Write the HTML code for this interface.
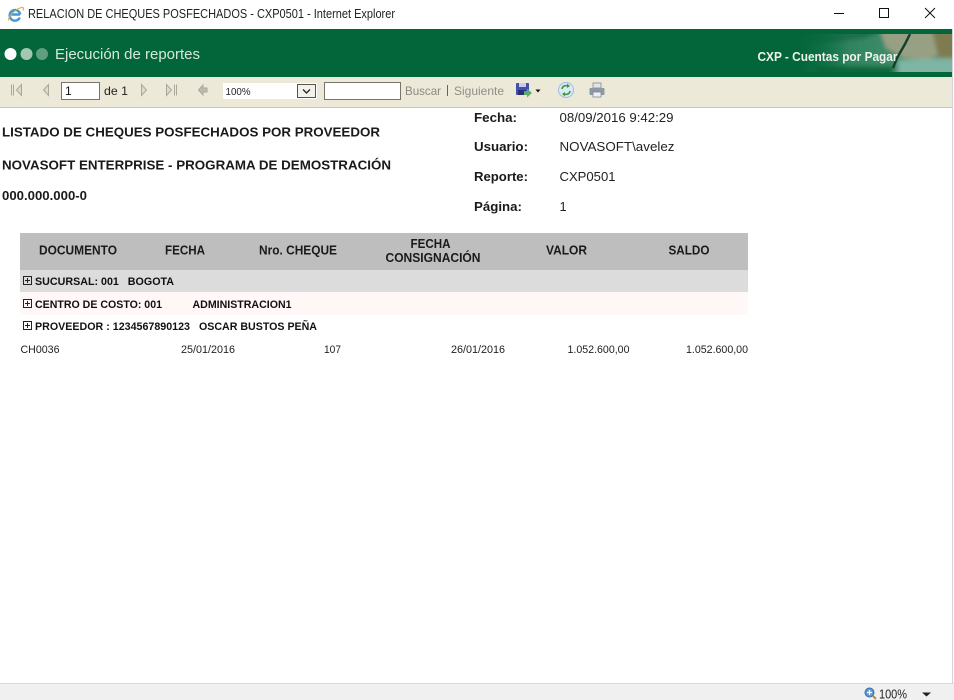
<!DOCTYPE html>
<html lang="es"><head><meta charset="utf-8"><title>RELACION DE CHEQUES POSFECHADOS - CXP0501 - Internet Explorer</title>
<style>
html,body{margin:0;padding:0;width:954px;height:700px;overflow:hidden;background:#fff}
svg{display:block;font-family:"Liberation Sans",Arial,sans-serif}
.h{font-size:12.8px;font-weight:bold;fill:#1a1a1a}
.g{font-size:11.2px;font-weight:bold;fill:#111}
.d{font-size:10.8px;fill:#222}
.m{font-size:12.8px;fill:#222}
</style></head><body>
<svg width="954" height="700" viewBox="0 0 954 700" xmlns="http://www.w3.org/2000/svg">
<defs>
<linearGradient id="fade" x1="0" x2="1" y1="0" y2="0"><stop offset="0" stop-color="#03663a"/><stop offset=".5" stop-color="#03663a" stop-opacity=".6"/><stop offset="1" stop-color="#03663a" stop-opacity="0"/></linearGradient>
<linearGradient id="ph" x1="0" x2="1" y1="0" y2="0"><stop offset="0" stop-color="#1f7a52"/><stop offset=".55" stop-color="#3c8a68"/><stop offset="1" stop-color="#6f9270"/></linearGradient>
<clipPath id="pc"><rect x="800" y="34" width="152" height="38"/></clipPath>
<filter id="bl" x="-10%" y="-10%" width="120%" height="120%"><feGaussianBlur stdDeviation="2.200"/></filter>
</defs>
<rect width="954" height="700" fill="#fff"/>

<!-- title bar -->
<path d="M10 14.500h10M19.800 17.500a5.300 5.300 0 1 1 .4-3" fill="none" stroke="#3f97dc" stroke-width="2.400"/>
<path d="M8.500 20.500c0-4 6-11 13-13 1.500-.5 2.500.5 1.500 3" fill="none" stroke="#e3ad36" stroke-width="1.100"/>
<text x="28" y="18" font-size="12.500" fill="#222" textLength="367" lengthAdjust="spacingAndGlyphs">RELACION DE CHEQUES POSFECHADOS - CXP0501 - Internet Explorer</text>
<path d="M834 13.500h10" stroke="#111" stroke-width="1"/>
<rect x="879.500" y="8.500" width="9" height="9" fill="none" stroke="#111"/>
<path d="M925 8l10 10M935 8l-10 10" stroke="#111" stroke-width="1" fill="none"/>

<!-- green banner -->
<rect x="0" y="29" width="952" height="48" fill="#03663a"/>
<circle cx="10.500" cy="54" r="6" fill="#fff"/>
<circle cx="26.500" cy="54" r="6" fill="#a3c7b3"/>
<circle cx="42" cy="54" r="6" fill="#5f9e80"/>
<text x="55" y="59" font-size="15" fill="#d6e8dd" textLength="145" lengthAdjust="spacingAndGlyphs">Ejecución de reportes</text>
<g clip-path="url(#pc)">
<g filter="url(#bl)">
<rect x="796" y="30" width="160" height="46" fill="url(#ph)"/>
<path d="M796 30h90l-20 8-30 4-40 2z" fill="#1a6f4b"/>
<path d="M815 66h80l-4 10h-76z" fill="#10693b"/>
<path d="M880 30h54l4 24-10 6-24-2-18-10z" fill="#98a084"/>
<path d="M932 30h24v30l-18-4z" fill="#7f7a50"/>
<path d="M898 60l58-2v18h-58z" fill="#7fb5a4"/>
</g>
<path d="M910 34l-5 10-8 14-4 10" fill="none" stroke="#14402a" stroke-width="2.400"/>
</g>
<rect x="800" y="34" width="50" height="38" fill="url(#fade)"/>
<text x="757.500" y="61" font-size="12.500" font-weight="bold" fill="#eef4ec" textLength="140" lengthAdjust="spacingAndGlyphs">CXP - Cuentas por Pagar</text>

<!-- toolbar -->
<rect x="0" y="77" width="952" height="30" fill="#ece9d8"/>
<rect x="0" y="107" width="952" height="1" fill="#c9c7ba"/>
<g fill="#dddbcc" stroke="#a9a79b" stroke-width="1">
<path d="M11.500 84.500v11M13.500 84.500v11" fill="none"/><path d="M21.500 84.500v11l-5-5.500z"/>
<path d="M48.500 84.500v11l-5-5.500z"/>
<path d="M141.500 84.500v11l5-5.500z"/>
<path d="M166.500 84.500v11l5-5.500z"/><path d="M174.500 84.500v11M176.500 84.500v11" fill="none"/>
<path d="M198.500 90l4.500-5v3h4v4h-4v3z" fill="#bdbbaf"/>
</g>
<rect x="61.500" y="82.500" width="38" height="17" fill="#fff" stroke="#77756a"/>
<text x="65" y="95" font-size="12" fill="#111">1</text>
<text x="104" y="95" font-size="12" fill="#222" textLength="24" lengthAdjust="spacingAndGlyphs">de 1</text>
<rect x="223" y="83" width="94" height="16" fill="#fff"/>
<text x="225.500" y="95" font-size="9.800" fill="#222">100%</text>
<rect x="297.500" y="84.500" width="18" height="13" fill="#f2f1ea" stroke="#55544c"/>
<path d="M303 89.500l3.500 3.500 3.500-3.500" fill="none" stroke="#222" stroke-width="1.300"/>
<rect x="324.500" y="82.500" width="76" height="17" fill="#fff" stroke="#77756a"/>
<text x="405" y="95" font-size="12" fill="#8a8a80" textLength="36" lengthAdjust="spacingAndGlyphs">Buscar</text>
<rect x="447" y="85" width="1" height="11" fill="#66655c"/>
<text x="454" y="95" font-size="12" fill="#8f8f85" textLength="50" lengthAdjust="spacingAndGlyphs">Siguiente</text>
<rect x="516" y="83" width="13" height="12" rx="1" fill="#4350b0"/>
<rect x="519" y="83" width="7" height="4" fill="#c9cde8"/>
<rect x="518" y="90" width="8" height="5" fill="#2a2f72"/>
<path d="M524 91h3v-2.500l5 4.500-5 4.500V95h-3z" fill="#5bab6a"/>
<path d="M535.500 89.500h5l-2.500 3z" fill="#111"/>
<circle cx="566" cy="90" r="7.500" fill="#dbe8f5" stroke="#9fbde0"/>
<path d="M562 89c.5-3 3-4 6-3M570 91c-.5 3-3 4-6 3" fill="none" stroke="#3d9a3a" stroke-width="1.600"/>
<path d="M567 83.500l3 2.500-3 2zM565 92l-3 2 3 2.500z" fill="#3d9a3a"/>
<rect x="593" y="83" width="8" height="5" fill="#e4e4e4" stroke="#7f8a96" stroke-width=".8"/>
<rect x="589.500" y="88" width="15" height="7" rx="1" fill="#8b98a5"/>
<rect x="593" y="92" width="8" height="5" fill="#eef0f2" stroke="#7f8a96" stroke-width=".8"/>

<!-- report header -->
<text x="2" y="136.500" class="h" textLength="378" lengthAdjust="spacingAndGlyphs">LISTADO DE CHEQUES POSFECHADOS POR PROVEEDOR</text>
<text x="2" y="169.500" class="h" textLength="389" lengthAdjust="spacingAndGlyphs">NOVASOFT ENTERPRISE - PROGRAMA DE DEMOSTRACIÓN</text>
<text x="2" y="200" class="h" textLength="85" lengthAdjust="spacingAndGlyphs">000.000.000-0</text>
<text x="474" y="122" class="h" textLength="43" lengthAdjust="spacingAndGlyphs">Fecha:</text>
<text x="474" y="151" class="h" textLength="54" lengthAdjust="spacingAndGlyphs">Usuario:</text>
<text x="474" y="181" class="h" textLength="54" lengthAdjust="spacingAndGlyphs">Reporte:</text>
<text x="474" y="211" class="h" textLength="48" lengthAdjust="spacingAndGlyphs">Página:</text>
<text x="559.500" y="122" class="m" textLength="114" lengthAdjust="spacingAndGlyphs">08/09/2016 9:42:29</text>
<text x="559.500" y="151" class="m" textLength="115" lengthAdjust="spacingAndGlyphs">NOVASOFT\avelez</text>
<text x="559.500" y="181" class="m" textLength="56" lengthAdjust="spacingAndGlyphs">CXP0501</text>
<text x="559.500" y="211" class="m">1</text>

<!-- table -->
<rect x="20" y="233" width="728" height="37" fill="#bebebe"/>
<rect x="20" y="270" width="728" height="22" fill="#dcdcdc"/>
<rect x="20" y="292" width="728" height="23" fill="#fff8f7"/>
<text x="39" y="254.500" class="h" textLength="78" lengthAdjust="spacingAndGlyphs">DOCUMENTO</text>
<text x="165" y="254.500" class="h" textLength="40" lengthAdjust="spacingAndGlyphs">FECHA</text>
<text x="259" y="254.500" class="h" textLength="78" lengthAdjust="spacingAndGlyphs">Nro. CHEQUE</text>
<text x="410.500" y="248" class="h" textLength="40" lengthAdjust="spacingAndGlyphs">FECHA</text>
<text x="385.500" y="262" class="h" textLength="95" lengthAdjust="spacingAndGlyphs">CONSIGNACIÓN</text>
<text x="546" y="254.500" class="h" textLength="41" lengthAdjust="spacingAndGlyphs">VALOR</text>
<text x="668.500" y="254.500" class="h" textLength="41" lengthAdjust="spacingAndGlyphs">SALDO</text>

<g fill="none" stroke="#222" stroke-width="1">
<rect x="23.500" y="276.500" width="8" height="8"/><path d="M25 280.500h5M27.500 278v5"/>
<rect x="23.500" y="299.500" width="8" height="8"/><path d="M25 303.500h5M27.500 301v5"/>
<rect x="23.500" y="321.500" width="8" height="8"/><path d="M25 325.500h5M27.500 323v5"/>
</g>
<text x="35" y="285" class="g" textLength="139" lengthAdjust="spacingAndGlyphs" xml:space="preserve">SUCURSAL: 001   BOGOTA</text>
<text x="35" y="308" class="g" textLength="127" lengthAdjust="spacingAndGlyphs">CENTRO DE COSTO: 001</text>
<text x="192.500" y="308" class="g" textLength="99" lengthAdjust="spacingAndGlyphs">ADMINISTRACION1</text>
<text x="35" y="330" class="g" textLength="155" lengthAdjust="spacingAndGlyphs">PROVEEDOR : 1234567890123</text>
<text x="199" y="330" class="g" textLength="118" lengthAdjust="spacingAndGlyphs">OSCAR BUSTOS PEÑA</text>

<text x="20.500" y="353" class="d" textLength="39" lengthAdjust="spacingAndGlyphs">CH0036</text>
<text x="181" y="353" class="d" textLength="54" lengthAdjust="spacingAndGlyphs">25/01/2016</text>
<text x="324" y="353" class="d" textLength="17" lengthAdjust="spacingAndGlyphs">107</text>
<text x="451" y="353" class="d" textLength="54" lengthAdjust="spacingAndGlyphs">26/01/2016</text>
<text x="567.500" y="353" class="d" textLength="62" lengthAdjust="spacingAndGlyphs">1.052.600,00</text>
<text x="686" y="353" class="d" textLength="62" lengthAdjust="spacingAndGlyphs">1.052.600,00</text>

<!-- right edge + status bar -->
<rect x="952" y="29" width="1" height="655" fill="#d4d4d4"/>
<rect x="0" y="684" width="954" height="16" fill="#f0f0f0"/>
<rect x="0" y="683" width="954" height="1" fill="#d9d9d9"/>
<circle cx="869.500" cy="692.500" r="4.500" fill="#5b9bd8" stroke="#3a6ea8"/>
<path d="M867 692.500h5M869.500 690v5" stroke="#fff" stroke-width="1.200"/>
<path d="M873 696l3 3" stroke="#b8863c" stroke-width="2"/>
<text x="879" y="698.500" font-size="12.500" fill="#222" textLength="28" lengthAdjust="spacingAndGlyphs">100%</text>
<path d="M922 692.500h9l-4.500 4z" fill="#222"/>
</svg>
</body></html>
